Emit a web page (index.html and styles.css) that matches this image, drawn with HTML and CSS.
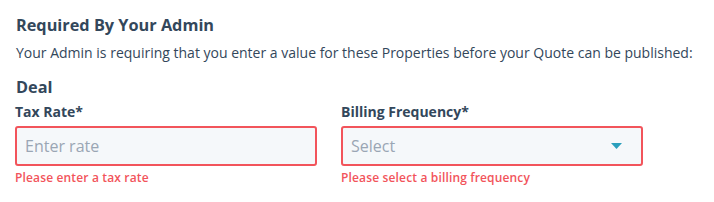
FILE: index.html
```html
<!DOCTYPE html>
<html>
<head>
<meta charset="utf-8">
<link rel="stylesheet" href="styles.css">
</head>
<body>
<div class="panel">
  <h2 class="title">Required By Your Admin</h2>
  <p class="desc">Your Admin is requiring that you enter a value for these Properties before your Quote can be published:</p>
  <h3 class="group">Deal</h3>
  <div class="fields">
    <div class="field">
      <label class="label">Tax Rate*</label>
      <div class="input"><span class="placeholder">Enter rate</span></div>
      <div class="error">Please enter a tax rate</div>
    </div>
    <div class="field">
      <label class="label">Billing Frequency*</label>
      <div class="input select"><span class="placeholder">Select</span>
        <svg class="caret" width="11" height="6" viewBox="0 0 11 6"><path d="M0 0H11L5.5 6Z" fill="#2a9fbc"/></svg>
      </div>
      <div class="error">Please select a billing frequency</div>
    </div>
  </div>
</div>
</body>
</html>
```
FILE: styles.css
```css
html, body { margin: 0; padding: 0; background: #fff; }
body { font-family: "Open Sans", "Noto Sans", sans-serif; color: #33475b; }
.panel { padding: 14px 15px 0 16px; }
.title { margin: 0; font-size: 16.3px; font-weight: 700; line-height: 22px; }
.desc { margin: 6px 0 0; font-size: 14px; line-height: 22px; color: #33475b; }
.group { margin: 12px 0 0; font-size: 16.3px; font-weight: 700; line-height: 22px; }
.fields { display: flex; gap: 24px; margin-top: 4px; margin-left: -1px; }
.field { width: 302px; display: flex; flex-direction: column; }
.label { font-size: 14px; font-weight: 700; line-height: 20px; margin-bottom: 4px; }
.input { box-sizing: border-box; height: 40px; border: 2px solid #f2545b; border-radius: 3px; background: #f5f8fa; display: flex; align-items: center; padding: 0 8px; justify-content: space-between; }
.placeholder { font-size: 16px; color: #9aa6b4; }
.caret { margin-right: 11px; }
.error { font-size: 12px; letter-spacing: 0.15px; color: #f2545b; line-height: 16px; margin-top: 4px; font-weight: 600; }
```
